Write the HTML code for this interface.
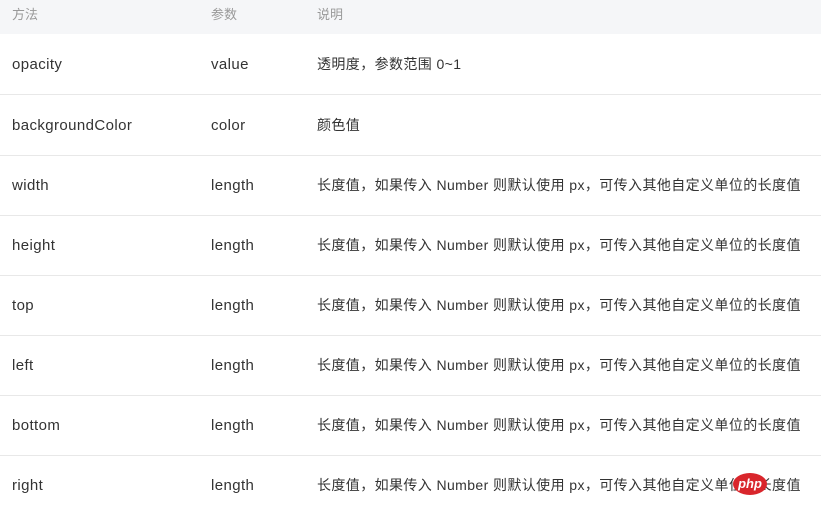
<!DOCTYPE html>
<html><head><meta charset="utf-8"><style>
body{margin:0;width:821px;height:505px;overflow:hidden;background:#fff;font-family:"Liberation Sans","Noto Sans CJK SC",sans-serif;font-size:14px;color:#333}
.h{position:absolute;left:0;top:0;width:821px;height:34px;background:#f5f6f8;color:#999;font-size:13px}
.r{position:absolute;left:0;width:821px;height:60px;border-bottom:1px solid #e8e8e8}
.c{position:absolute;line-height:20px;white-space:nowrap}
.h .c{top:5px}
.r .c{top:20px}
.r .a,.r .b{font-size:15px;letter-spacing:.4px;top:21px}
.a{left:12px}.b{left:211px}.d{left:317px;letter-spacing:.4px}
.logo{position:absolute;left:733px;top:473px;width:34px;height:22px;border-radius:50%;background:#d9262c;color:#fff;font-size:13px;font-weight:bold;font-style:italic;text-align:center;line-height:21px}
</style></head><body>
<div class="h"><span class="c" style="left:12px">方法</span><span class="c" style="left:211px">参数</span><span class="c" style="left:317px">说明</span></div>
<div class="r" style="top:34px"><span class="c a">opacity</span><span class="c b">value</span><span class="c d">透明度，参数范围 0~1</span></div>
<div class="r" style="top:95px"><span class="c a">backgroundColor</span><span class="c b">color</span><span class="c d">颜色值</span></div>
<div class="r" style="top:155px"><span class="c a">width</span><span class="c b">length</span><span class="c d">长度值，如果传入 Number 则默认使用 px，可传入其他自定义单位的长度值</span></div>
<div class="r" style="top:215px"><span class="c a">height</span><span class="c b">length</span><span class="c d">长度值，如果传入 Number 则默认使用 px，可传入其他自定义单位的长度值</span></div>
<div class="r" style="top:275px"><span class="c a">top</span><span class="c b">length</span><span class="c d">长度值，如果传入 Number 则默认使用 px，可传入其他自定义单位的长度值</span></div>
<div class="r" style="top:335px"><span class="c a">left</span><span class="c b">length</span><span class="c d">长度值，如果传入 Number 则默认使用 px，可传入其他自定义单位的长度值</span></div>
<div class="r" style="top:395px"><span class="c a">bottom</span><span class="c b">length</span><span class="c d">长度值，如果传入 Number 则默认使用 px，可传入其他自定义单位的长度值</span></div>
<div class="r" style="top:455px;border:none"><span class="c a">right</span><span class="c b">length</span><span class="c d">长度值，如果传入 Number 则默认使用 px，可传入其他自定义单位的长度值</span></div>
<div class="logo">php</div>
</body></html>
